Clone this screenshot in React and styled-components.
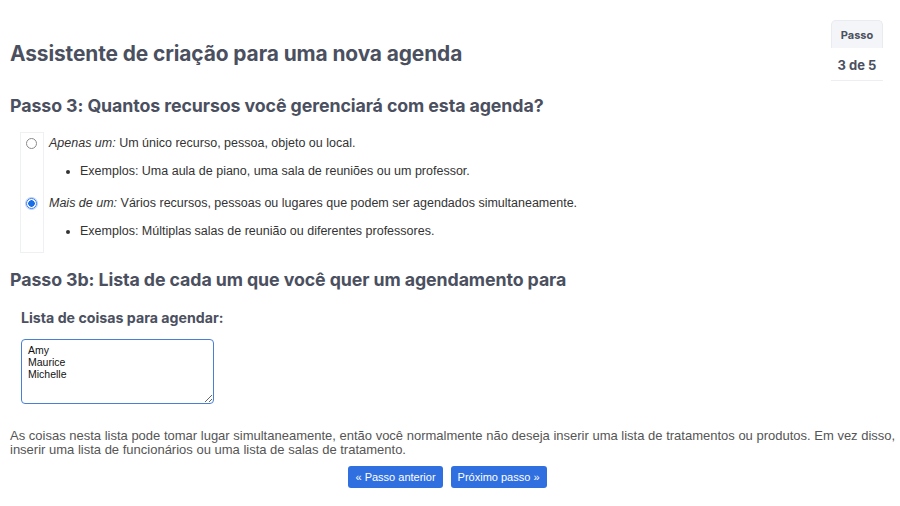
import styled, { createGlobalStyle } from "styled-components";

const GlobalStyle = createGlobalStyle`
  body {
    margin: 0;
    background: #fff;
    font-family: "Liberation Sans", Arial, sans-serif;
    color: #333;
  }
`;

const Page = styled.div`
  padding: 20px 2px 16px 10px;
`;

const TitleRow = styled.div`
  display: flex;
  justify-content: space-between;
  align-items: flex-start;
`;

const Title = styled.h1`
  margin: 21px 0 0;
  font-family: Inter, sans-serif;
  font-size: 20.9px;
  font-weight: 700;
  color: #4b5060;
  letter-spacing: -0.1px;
`;

const StepBadge = styled.div`
  display: flex;
  flex-direction: column;
  align-items: center;
  width: 52px;
  margin-right: 15px;
  font-family: Inter, sans-serif;
  color: #4b5060;
  font-weight: 700;
`;

const BadgeHead = styled.div`
  width: 100%;
  box-sizing: border-box;
  height: 28px;
  line-height: 28px;
  text-align: center;
  font-size: 11px;
  background: #f3f5f8;
  border: 1px solid #e8ebef;
  border-bottom: none;
  border-radius: 5px 5px 0 0;
`;

const BadgeBody = styled.div`
  width: 100%;
  text-align: center;
  font-size: 13px;
  padding: 9px 0 7px;
  border-bottom: 1px solid #eceef1;
`;

const StepHeading = styled.h2`
  margin: ${(p) => p.$top || "16px"} 0 0;
  font-family: Inter, sans-serif;
  font-size: 17.8px;
  font-weight: 700;
  color: #4b5060;
  letter-spacing: -0.1px;
`;

const Options = styled.table`
  margin: 16px 0 0 10px;
  border-collapse: collapse;
  font-size: 12.5px;
  color: #333;
`;

const RadioCell = styled.td`
  width: 17px;
  vertical-align: top;
  border: 1px solid #eef0f2;
  border-bottom: ${(p) => (p.$last ? "1px solid #eef0f2" : "none")};
  border-top: ${(p) => (p.$first ? "1px solid #eef0f2" : "none")};
  padding: 5px 0 0 5px;
`;

const TextCell = styled.td`
  vertical-align: top;
  padding: 3px 0 0 5px;
`;

const Radio = styled.span`
  display: block;
  width: 11px;
  height: 11px;
  box-sizing: border-box;
  border-radius: 50%;
  border: 1px solid ${(p) => (p.$checked ? "#3f7fe8" : "#8a8a8a")};
  background: ${(p) =>
    p.$checked ? "radial-gradient(circle, #1b6fe6 0 3px, #fff 3.5px)" : "#fff"};
  box-shadow: ${(p) => (p.$checked ? "0 0 0 1px #b9d2f7" : "none")};
`;

const OptionText = styled.div`
  line-height: 15px;
`;

const Examples = styled.ul`
  margin: 13px 0 14px;
  padding-left: 31px;
  line-height: 15px;
`;

const ListLabel = styled.div`
  margin: 19px 0 0 11px;
  font-family: Inter, sans-serif;
  font-size: 14.2px;
  font-weight: 700;
  color: #4b5060;
`;

const ListBox = styled.textarea`
  display: block;
  margin: 13px 0 0 11px;
  width: 193px;
  height: 65px;
  box-sizing: border-box;
  border: 1.5px solid #4a7fd8;
  border-radius: 4px;
  padding: 4px 6px;
  font-family: "Liberation Sans", Arial, sans-serif;
  font-size: 10.5px;
  line-height: 12px;
  color: #111;
  outline: none;
`;

const Note = styled.p`
  margin: 25px 0 0;
  font-size: 13px;
  line-height: 14px;
  color: #555;
`;

const Actions = styled.div`
  display: flex;
  justify-content: center;
  gap: 8px;
  margin-top: 9px;
  padding-right: 13px;
`;

const StepButton = styled.button`
  height: 22px;
  padding: 0 7px;
  border: none;
  border-radius: 3px;
  background: #306fdf;
  color: #fff;
  font-family: "Liberation Sans", Arial, sans-serif;
  font-size: 11px;
  cursor: pointer;
`;

const options = [
  {
    label: "Apenas um:",
    text: " Um único recurso, pessoa, objeto ou local.",
    example: "Exemplos: Uma aula de piano, uma sala de reuniões ou um professor.",
    checked: false,
  },
  {
    label: "Mais de um:",
    text: " Vários recursos, pessoas ou lugares que podem ser agendados simultaneamente.",
    example: "Exemplos: Múltiplas salas de reunião ou diferentes professores.",
    checked: true,
  },
];

export default function App() {
  return (
    <>
      <GlobalStyle />
      <Page>
        <TitleRow>
          <Title>Assistente de criação para uma nova agenda</Title>
          <StepBadge>
            <BadgeHead>Passo</BadgeHead>
            <BadgeBody>3 de 5</BadgeBody>
          </StepBadge>
        </TitleRow>

        <StepHeading $top="14px">
          Passo 3: Quantos recursos você gerenciará com esta agenda?
        </StepHeading>

        <Options>
          <tbody>
            {options.map((o, i) => (
              <tr key={o.label}>
                <RadioCell $first={i === 0} $last={i === options.length - 1}>
                  <Radio $checked={o.checked} />
                </RadioCell>
                <TextCell>
                  <OptionText>
                    <em>{o.label}</em>
                    {o.text}
                  </OptionText>
                  <Examples>
                    <li>{o.example}</li>
                  </Examples>
                </TextCell>
              </tr>
            ))}
          </tbody>
        </Options>

        <StepHeading $top="16px">
          Passo 3b: Lista de cada um que você quer um agendamento para
        </StepHeading>

        <ListLabel>Lista de coisas para agendar:</ListLabel>
        <ListBox defaultValue={"Amy\nMaurice\nMichelle"} />

        <Note>
          As coisas nesta lista pode tomar lugar simultaneamente, então você
          normalmente não deseja inserir uma lista de tratamentos ou produtos.
          Em vez disso, inserir uma lista de funcionários ou uma lista de salas
          de tratamento.
        </Note>

        <Actions>
          <StepButton>« Passo anterior</StepButton>
          <StepButton>Próximo passo »</StepButton>
        </Actions>
      </Page>
    </>
  );
}
